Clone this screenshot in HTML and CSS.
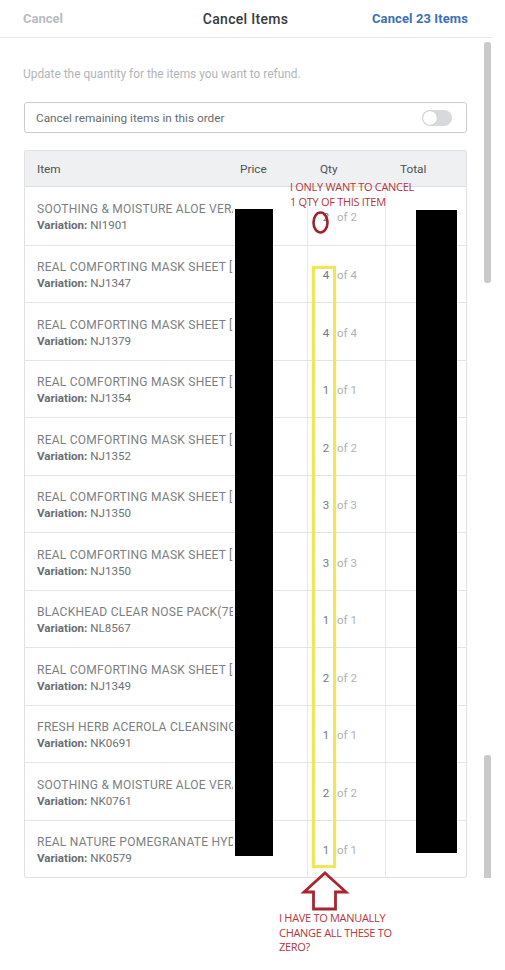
FILE: index.html
```html
<!DOCTYPE html>
<html>
<head>
<meta charset="utf-8">
<link rel="stylesheet" href="styles.css">
</head>
<body>
<div class="app">
  <header class="topbar">
    <span class="btn-cancel">Cancel</span>
    <span class="title">Cancel Items</span>
    <span class="btn-confirm">Cancel 23 Items</span>
  </header>
  <main class="content">
    <p class="hint">Update the quantity for the items you want to refund.</p>
    <div class="toggle-row">
      <span>Cancel remaining items in this order</span>
      <span class="switch"><span class="knob"></span></span>
    </div>
    <div class="table">
      <div class="thead">
        <div class="c-item">Item</div>
        <div class="c-price">Price</div>
        <div class="c-qty">Qty</div>
        <div class="c-total">Total</div>
      </div>
      <div class="row"><div class="c-item"><div class="name">SOOTHING &amp; MOISTURE ALOE VERA GEL</div><div class="var"><b>Variation:</b> NI1901</div></div><div class="c-price"></div><div class="c-qty"><span class="num">2</span><span class="of">of 2</span></div><div class="c-total"></div></div>
      <div class="row"><div class="c-item"><div class="name">REAL COMFORTING MASK SHEET [KALE]</div><div class="var"><b>Variation:</b> NJ1347</div></div><div class="c-price"></div><div class="c-qty"><span class="num">4</span><span class="of">of 4</span></div><div class="c-total"></div></div>
      <div class="row"><div class="c-item"><div class="name">REAL COMFORTING MASK SHEET [CUCUMBER]</div><div class="var"><b>Variation:</b> NJ1379</div></div><div class="c-price"></div><div class="c-qty"><span class="num">4</span><span class="of">of 4</span></div><div class="c-total"></div></div>
      <div class="row"><div class="c-item"><div class="name">REAL COMFORTING MASK SHEET [YOGURT]</div><div class="var"><b>Variation:</b> NJ1354</div></div><div class="c-price"></div><div class="c-qty"><span class="num">1</span><span class="of">of 1</span></div><div class="c-total"></div></div>
      <div class="row"><div class="c-item"><div class="name">REAL COMFORTING MASK SHEET [COLLAGEN]</div><div class="var"><b>Variation:</b> NJ1352</div></div><div class="c-price"></div><div class="c-qty"><span class="num">2</span><span class="of">of 2</span></div><div class="c-total"></div></div>
      <div class="row"><div class="c-item"><div class="name">REAL COMFORTING MASK SHEET [TEA TREE]</div><div class="var"><b>Variation:</b> NJ1350</div></div><div class="c-price"></div><div class="c-qty"><span class="num">3</span><span class="of">of 3</span></div><div class="c-total"></div></div>
      <div class="row"><div class="c-item"><div class="name">REAL COMFORTING MASK SHEET [TOMATO]</div><div class="var"><b>Variation:</b> NJ1350</div></div><div class="c-price"></div><div class="c-qty"><span class="num">3</span><span class="of">of 3</span></div><div class="c-total"></div></div>
      <div class="row"><div class="c-item"><div class="name">BLACKHEAD CLEAR NOSE PACK(7EA)</div><div class="var"><b>Variation:</b> NL8567</div></div><div class="c-price"></div><div class="c-qty"><span class="num">1</span><span class="of">of 1</span></div><div class="c-total"></div></div>
      <div class="row"><div class="c-item"><div class="name">REAL COMFORTING MASK SHEET [ALOE]</div><div class="var"><b>Variation:</b> NJ1349</div></div><div class="c-price"></div><div class="c-qty"><span class="num">2</span><span class="of">of 2</span></div><div class="c-total"></div></div>
      <div class="row"><div class="c-item"><div class="name">FRESH HERB ACEROLA CLEANSING FOAM</div><div class="var"><b>Variation:</b> NK0691</div></div><div class="c-price"></div><div class="c-qty"><span class="num">1</span><span class="of">of 1</span></div><div class="c-total"></div></div>
      <div class="row"><div class="c-item"><div class="name">SOOTHING &amp; MOISTURE ALOE VERA GEL</div><div class="var"><b>Variation:</b> NK0761</div></div><div class="c-price"></div><div class="c-qty"><span class="num">2</span><span class="of">of 2</span></div><div class="c-total"></div></div>
      <div class="row"><div class="c-item"><div class="name">REAL NATURE POMEGRANATE HYDRO GEL</div><div class="var"><b>Variation:</b> NK0579</div></div><div class="c-price"></div><div class="c-qty"><span class="num">1</span><span class="of">of 1</span></div><div class="c-total"></div></div>
    </div>
  </main>

  <div class="scroll-thumb thumb-top"></div>
  <div class="scroll-thumb thumb-bottom"></div>

  <div class="redact redact-price"></div>
  <div class="redact redact-total"></div>

  <div class="mark-box"></div>
  <svg class="marks" width="505" height="970" viewBox="0 0 505 970">
    <ellipse cx="320.5" cy="222.5" rx="7" ry="10" fill="none" stroke="#a31f2c" stroke-width="2.6"/>
    <polygon points="325,873 346,892 335.5,892 335.5,909 313.5,909 313.5,892 304,892" fill="none" stroke="#a8262f" stroke-width="2.8" stroke-linejoin="miter"/>
  </svg>
  <div class="note note-top">I ONLY WANT TO CANCEL<br>1 QTY OF THIS ITEM</div>
  <div class="note note-bottom">I HAVE TO MANUALLY<br>CHANGE ALL THESE TO<br>ZERO?</div>
</div>
</body>
</html>
```

FILE: styles.css
```css
body {
  margin: 0;
  background: #ffffff;
  font-family: Roboto, "Liberation Sans", Arial, sans-serif;
}

.app {
  position: relative;
  width: 505px;
  height: 970px;
  overflow: hidden;
}

.topbar {
  width: 492px;
  height: 38px;
  box-sizing: border-box;
  padding: 0 24px 0 23px;
  border-bottom: 1px solid #e4e6e8;
  display: grid;
  grid-template-columns: 1fr auto 1fr;
  align-items: center;
}

.btn-cancel {
  font-size: 13px;
  font-weight: 700;
  color: #b9bdc1;
}

.title {
  font-size: 14px;
  font-weight: 500;
  color: #373a3d;
  letter-spacing: 0.3px;
}

.btn-confirm {
  justify-self: end;
  font-size: 13px;
  font-weight: 700;
  color: #3b70b3;
  letter-spacing: 0.1px;
}

.content {
  width: 492px;
  box-sizing: border-box;
  padding: 0 25px 0 24px;
}

.hint {
  margin: 28px 0 0 -1px;
  font-size: 11.9px;
  line-height: 16px;
  color: #b1b5ba;
}

.toggle-row {
  margin-top: 20px;
  height: 31px;
  box-sizing: border-box;
  border: 1px solid #c9ccd0;
  border-radius: 3px;
  padding: 0 14px 0 11px;
  display: flex;
  align-items: center;
  justify-content: space-between;
  font-size: 11.8px;
  color: #686c70;
}

.switch {
  width: 30px;
  height: 16px;
  border-radius: 8px;
  background: #d7d9dc;
  position: relative;
}

.knob {
  position: absolute;
  left: 1px;
  top: 1px;
  width: 14px;
  height: 14px;
  border-radius: 50%;
  background: #ffffff;
  box-shadow: 0 0 1px rgba(0, 0, 0, 0.25);
}

.table {
  margin-top: 17px;
  border: 1px solid #dfe1e3;
  border-radius: 2px;
}

.thead,
.row {
  display: grid;
  grid-template-columns: 208px 74px 79px 80px;
}

.thead {
  height: 36px;
  box-sizing: border-box;
  background: #eef0f2;
  border-bottom: 1px solid #dcdfe2;
  align-items: center;
  font-size: 11.8px;
  color: #4d5155;
  padding-top: 1px;
}

.thead .c-item { padding-left: 12px; }
.thead .c-price { padding-left: 7px; }
.thead .c-qty { padding-left: 13px; }
.thead .c-total { padding-left: 14px; }

.row {
  height: 57.5px;
  box-sizing: border-box;
  border-top: 1px solid #e3e5e7;
}

.thead + .row {
  border-top: none;
}

.row .c-item {
  padding: 3px 0 0 12px;
  display: flex;
  flex-direction: column;
  justify-content: center;
  overflow: hidden;
  white-space: nowrap;
  line-height: 16px;
  color: #7b7f83;
}

.row .name {
  font-size: 12px;
  letter-spacing: 0.25px;
}

.row .var {
  font-size: 11.6px;
  color: #6d7175;
}

.row .var b {
  font-weight: 700;
  color: #6a6e72;
}

.row .c-qty {
  border-left: 1px solid #e8e9eb;
  border-right: 1px solid #e8e9eb;
  display: flex;
  align-items: center;
  padding: 3px 0 0 13px;
  font-size: 11.5px;
}

.num {
  width: 10px;
  text-align: center;
  color: #75797d;
}

.of {
  margin-left: 6px;
  color: #aeb2b6;
}

.scroll-thumb {
  position: absolute;
  left: 484px;
  width: 7px;
  background: #c9c9c9;
}

.thumb-top {
  top: 42px;
  height: 241px;
  border-radius: 3px;
}

.thumb-bottom {
  top: 755px;
  height: 123px;
  border-radius: 3px 3px 0 0;
}

.redact {
  position: absolute;
  background: #000000;
}

.redact-price {
  left: 235px;
  top: 209px;
  width: 38px;
  height: 647px;
}

.redact-total {
  left: 416px;
  top: 210px;
  width: 41px;
  height: 643px;
}

.mark-box {
  position: absolute;
  left: 312px;
  top: 266px;
  width: 18px;
  height: 596px;
  border: 3px solid #efe65c;
  box-shadow: 0 0 2px rgba(240, 230, 90, 0.6);
}

.marks {
  position: absolute;
  left: 0;
  top: 0;
  pointer-events: none;
}

.note {
  position: absolute;
  font-family: "Open Sans", "Liberation Sans", sans-serif;
  font-size: 11px;
  color: #b7343c;
  letter-spacing: -0.3px;
  white-space: nowrap;
}

.note-top {
  left: 290px;
  top: 179px;
  line-height: 15px;
}

.note-bottom {
  left: 279px;
  top: 911px;
  line-height: 14.5px;
}
```
